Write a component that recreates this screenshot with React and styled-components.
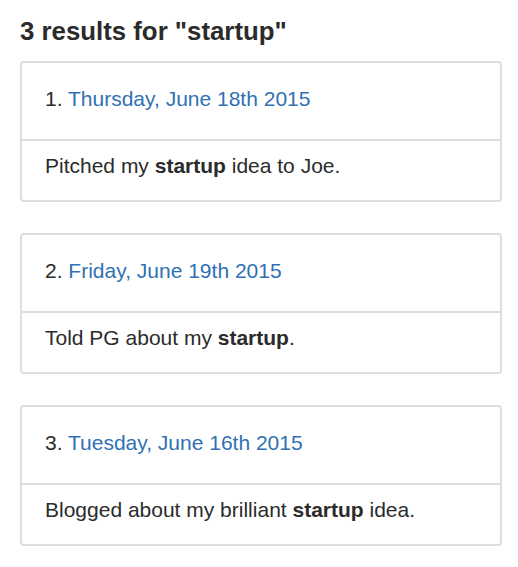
import React from 'react'
import styled, { createGlobalStyle } from 'styled-components'

const GlobalStyle = createGlobalStyle`
    body{
        margin:0;
        background:#fff;
        font-family:"Liberation Sans", Arial, sans-serif;
        color:#2b2b2b;
    }
`

const Page = styled.div`
    padding:0 16px 0 20px;
`

const Title = styled.h3`
    margin:18px 0 15px;
    font-size:25.8px;
    line-height:1.07;
    font-weight:bold;
`

const Panel = styled.div`
    width:482px;
    box-sizing:border-box;
    border:2px solid #dedede;
    border-radius:4px;
    margin-bottom:31px;
    font-size:21px;
    line-height:30px;
`

const PanelHeading = styled.div`
    padding:21px 23px 25px;
    border-bottom:2px solid #dedede;
`

const PanelBody = styled.div`
    padding:10px 23px 19px;
`

const DateLink = styled.a`
    color:#2f71b3;
    text-decoration:none;
`

const results = [
    { date: 'Thursday, June 18th 2015', before: 'Pitched my ', after: ' idea to Joe.' },
    { date: 'Friday, June 19th 2015', before: 'Told PG about my ', after: '.' },
    { date: 'Tuesday, June 16th 2015', before: 'Blogged about my brilliant ', after: ' idea.' },
]

export default function App() {
    return (
        <Page>
            <GlobalStyle />
            <Title>3 results for "startup"</Title>

            {results.map((r, i) => (
                <Panel key={i}>
                    <PanelHeading>
                        {i + 1}. <DateLink href="#">{r.date}</DateLink>
                    </PanelHeading>
                    <PanelBody>
                        {r.before}<b>startup</b>{r.after}
                    </PanelBody>
                </Panel>
            ))}
        </Page>
    )
}
